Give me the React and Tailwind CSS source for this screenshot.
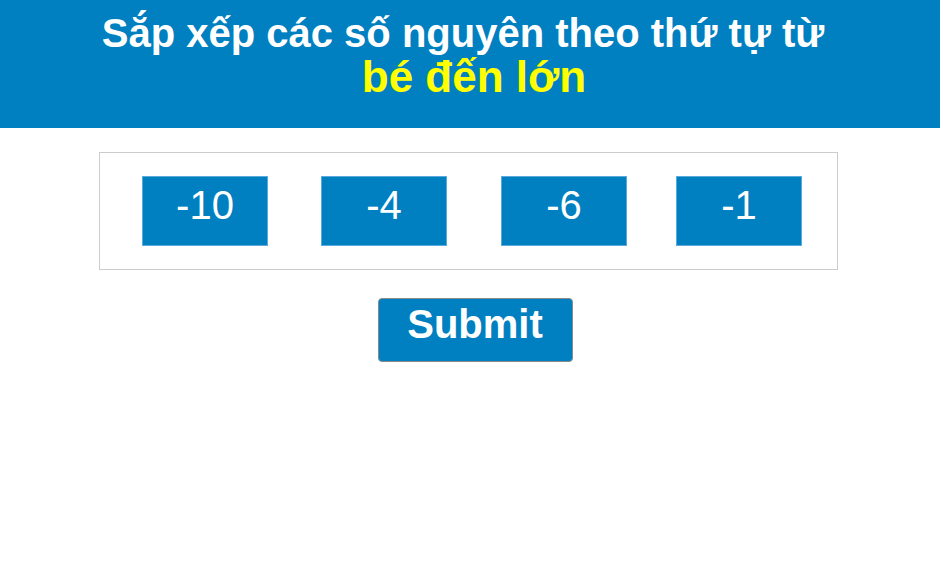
export default function App() {
  const nums = [-10, -4, -6, -1];
  const gaps = ['ml-0', 'ml-[53px]', 'ml-[54px]', 'ml-[49px]'];
  return (
    <div className="w-[940px] h-[564px] bg-white" style={{ fontFamily: '"Liberation Sans", Arial, sans-serif' }}>
      <div className="h-[128px] bg-[#0080c0] pt-[11px] text-center font-bold">
        <div className="text-white text-[40px] leading-[44px] pr-[14px]">Sắp xếp các số nguyên theo thứ tự từ</div>
        <div className="text-[#ffff00] text-[44px] leading-[44px] pl-[8px]">bé đến lớn</div>
      </div>
      <div className="ml-[99px] mt-[24px] w-[739px] h-[118px] border border-[#cccccc] flex items-start pt-[23px] pl-[42px]">
        {nums.map((n, i) => (
          <div
            key={n}
            className={`${gaps[i]} w-[126px] h-[70px] bg-[#0080c0] border border-[#5aaadb] text-white text-[40px] leading-none flex items-center justify-center pb-[13px]`}
          >
            {n}
          </div>
        ))}
      </div>
      <div className="flex justify-center mt-[28px] pl-[10px]">
        <button className="w-[195px] h-[64px] bg-[#0080c0] border border-[#8a8a8a] rounded-[4px] text-white font-bold text-[40px] leading-none pb-[12px]">
          Submit
        </button>
      </div>
    </div>
  );
}
